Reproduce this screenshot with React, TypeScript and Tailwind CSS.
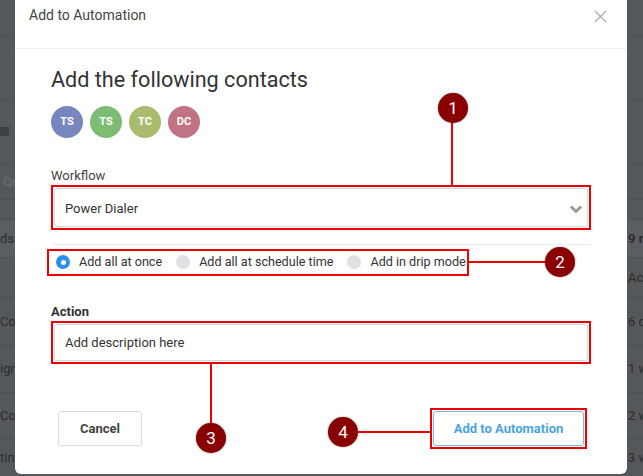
import React from "react";

const contacts = [
  { initials: "TS", color: "bg-[#7886bf]" },
  { initials: "TS", color: "bg-[#7dbd73]" },
  { initials: "TC", color: "bg-[#a8bb6e]" },
  { initials: "DC", color: "bg-[#c07483]" },
];

// rows of the dimmed page behind the dialog
const rows = [
  { h: "h-[36px]", left: "", right: "" },
  { h: "h-[64px]", left: "", right: "" },
  { h: "h-[64px]", left: "", right: "", menu: true },
  { h: "h-[36px]", left: "Qu", right: "", faint: true },
  { h: "h-[20px]", left: "", right: "" },
  { h: "h-[38px]", left: "ds.", right: "9 records", shade: true },
  { h: "h-[40px]", left: "", right: "Activity" },
  { h: "h-[48px]", left: "Co", right: "6 days ago" },
  { h: "h-[47px]", left: "ign", right: "1 week ago" },
  { h: "h-[46px]", left: "Con", right: "2 weeks ago" },
  { h: "h-[37px]", left: "tin", right: "3 weeks ago" },
];

function Marker({ n, className }: { n: number; className: string }) {
  return (
    <div
      className={`absolute w-[30px] h-[30px] rounded-full bg-[#8a0000] text-white text-[17px] leading-[30px] text-center shadow-[0_0_2px_rgba(0,0,0,0.5)] ${className}`}
    >
      {n}
    </div>
  );
}

function Radio({ label, checked }: { label: string; checked?: boolean }) {
  return (
    <label className="flex items-center gap-[9px] whitespace-nowrap">
      {checked ? (
        <span className="w-[14px] h-[14px] rounded-full bg-[#2b8ff0] flex items-center justify-center">
          <span className="w-[5px] h-[5px] rounded-full bg-white" />
        </span>
      ) : (
        <span className="w-[14px] h-[14px] rounded-full bg-[#dfe1e6]" />
      )}
      <span className="text-[12.6px] text-[#333]">{label}</span>
    </label>
  );
}

export default function App() {
  return (
    <div className="relative w-[643px] h-[476px] overflow-hidden bg-[#55585b] font-['Roboto',sans-serif]">
      <div className="flex flex-col text-[13px] text-[#2a2c2e]">
        {rows.map((r, i) => (
          <div
            key={i}
            className={`${r.h} flex items-center justify-between whitespace-nowrap ${
              i < rows.length - 1 ? "border-b border-[#4d5053]" : ""
            } ${r.shade ? "bg-[#5a5e62]" : ""}`}
          >
            <span className={`flex-1 ${r.faint ? "pl-[3px] text-[#6c7074]" : ""}`}>
              {r.menu ? <span className="block w-[9px] h-[9px] bg-[#3e4144]" /> : r.left}
            </span>
            <span className={`w-[15px] ${r.shade ? "font-bold" : ""}`}>{r.right}</span>
          </div>
        ))}
      </div>

      {/* dialog */}
      <div className="absolute left-[15px] top-0 w-[612px] h-[474px] bg-white rounded-b-[6px] flex flex-col">
        <div className="h-[49px] border-b border-[#eef0f2] flex items-start justify-between pl-[14px] pr-[20px] pt-[6px]">
          <span className="text-[14px] leading-[18px] text-[#444]">Add to Automation</span>
          <svg width="13" height="13" viewBox="0 0 13 13" className="mt-[4px]">
            <path d="M1 1L12 12M12 1L1 12" stroke="#a9b0b6" strokeWidth="1.4" />
          </svg>
        </div>

        <div className="flex flex-col px-[36px] pt-[16px]">
          <h2 className="text-[21.6px] leading-[30px] text-[#333]">Add the following contacts</h2>
          <div className="flex gap-[7px] mt-[11px]">
            {contacts.map((c, i) => (
              <div
                key={i}
                className={`w-[32px] h-[32px] rounded-full ${c.color} text-white text-[11px] font-bold flex items-center justify-center`}
              >
                {c.initials}
              </div>
            ))}
          </div>

          <div className="mt-[29px] text-[13px] leading-[18px] text-[#444]">Workflow</div>
          <div className="border-2 border-[#ee0000] p-px">
            <div className="h-[39px] border border-[#d5d8dc] rounded-[3px] flex items-center justify-between pl-[10px] pr-[4px]">
              <span className="text-[13px] text-[#333] pt-[3px]">Power Dialer</span>
              <svg width="14" height="10" viewBox="0 0 14 10" className="mt-[3px]">
                <path d="M2 2.5L7 7.5L12 2.5" stroke="#9a9a9a" strokeWidth="3" fill="none" />
              </svg>
            </div>
          </div>

          <div className="mt-[14px] mx-[1px] border-t border-[#e8eef3]" />
          <div className="mt-[4px] -ml-[4px] w-[422px] h-[27px] border-2 border-[#ee0000] flex items-center gap-[14px] pl-[7px]">
            <Radio label="Add all at once" checked />
            <Radio label="Add all at schedule time" />
            <Radio label="Add in drip mode" />
          </div>

          <div className="mt-[27px] text-[13px] leading-[18px] font-bold text-[#333]">Action</div>
          <div className="border-2 border-[#ee0000] p-px">
            <div className="h-[37px] border border-[#d5d8dc] rounded-[3px] flex items-center pl-[10px]">
              <span className="text-[13px] text-[#333]">Add description here</span>
            </div>
          </div>

          <div className="mt-[44px] flex items-center justify-between">
            <button className="ml-[7px] w-[84px] h-[35px] border border-[#d8dbe0] rounded-[3px] text-[13px] font-bold text-[#444]">
              Cancel
            </button>
            <div className="mr-[4px] border-2 border-[#ee0000] p-px">
              <button className="w-[151px] h-[35px] border border-[#7ab9e3] rounded-[3px] text-[13px] font-bold text-[#4aa3dd]">
                Add to Automation
              </button>
            </div>
          </div>
        </div>
      </div>

      {/* callout markers */}
      <div className="absolute left-[451px] top-[108px] w-[2px] h-[77px] bg-[#ee0000]" />
      <Marker n={1} className="left-[438px] top-[93px]" />
      <div className="absolute left-[469px] top-[261px] w-[78px] h-[2px] bg-[#ee0000]" />
      <Marker n={2} className="left-[545px] top-[247px]" />
      <div className="absolute left-[210px] top-[363px] w-[2px] h-[64px] bg-[#ee0000]" />
      <Marker n={3} className="left-[196px] top-[423px]" />
      <div className="absolute left-[356px] top-[431px] w-[75px] h-[2px] bg-[#ee0000]" />
      <Marker n={4} className="left-[328px] top-[417px]" />
    </div>
  );
}
